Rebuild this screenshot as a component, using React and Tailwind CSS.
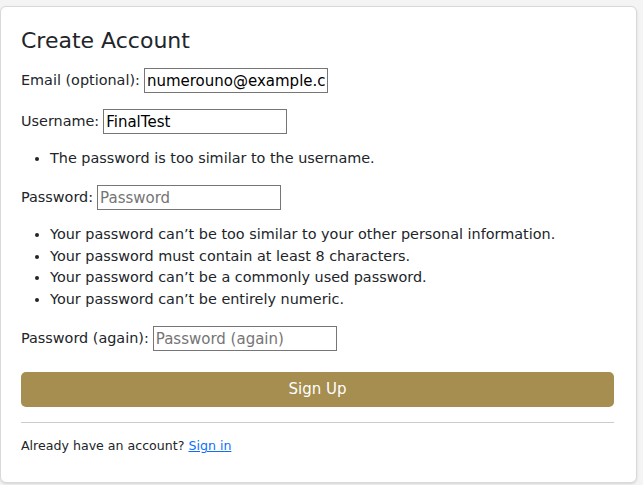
import React from "react";

const rules = [
  "Your password can’t be too similar to your other personal information.",
  "Your password must contain at least 8 characters.",
  "Your password can’t be a commonly used password.",
  "Your password can’t be entirely numeric.",
];

const Field = ({ label, value, placeholder, className = "" }) => (
  <div className={`flex items-center ${className}`}>
    <label className="mr-[4px] leading-[25px]">{label}</label>
    <input
      className="h-[25px] w-[184px] border border-[#767676] px-[2px] text-[15px] text-black placeholder:text-[#757575] outline-none"
      defaultValue={value}
      placeholder={placeholder}
    />
  </div>
);

const App = () => {
  return (
    <div className="min-h-[485px] bg-[#f4f4f4] pt-[6px] font-['DejaVu_Sans',sans-serif] text-[14.4px] text-[#212529]">
      <div className="w-[637px] rounded-[6px] border border-[#d9d9d9] bg-white pl-[20px] pr-[22px] pt-[21px] pb-[26px] shadow-sm">
        <h1 className="text-[22px] leading-[26px] text-[#212529]">Create Account</h1>

        <Field className="mt-[14px]" label="Email (optional):" value="numerouno@example.com" />
        <Field className="mt-[16px]" label="Username:" value="FinalTest" />

        <ul className="mt-[13px] list-disc pl-[29px] leading-[22px]">
          <li>The password is too similar to the username.</li>
        </ul>

        <Field className="mt-[16px]" label="Password:" placeholder="Password" />

        <ul className="mt-[14px] list-disc pl-[29px] leading-[21.5px]">
          {rules.map((r) => (
            <li key={r}>{r}</li>
          ))}
        </ul>

        <Field className="mt-[16px]" label="Password (again):" placeholder="Password (again)" />

        <button className="mt-[21px] h-[35px] w-full rounded-[5px] bg-[#a68d50] text-[15px] font-medium text-white">
          Sign Up
        </button>

        <hr className="mt-[15px] border-t border-[#cccccc]" />

        <p className="mt-[13px] text-[12.6px] leading-[20px]">
          Already have an account?{" "}
          <a href="#" className="text-[#0d6efd] underline">
            Sign in
          </a>
        </p>
      </div>
    </div>
  );
};

export default App;
